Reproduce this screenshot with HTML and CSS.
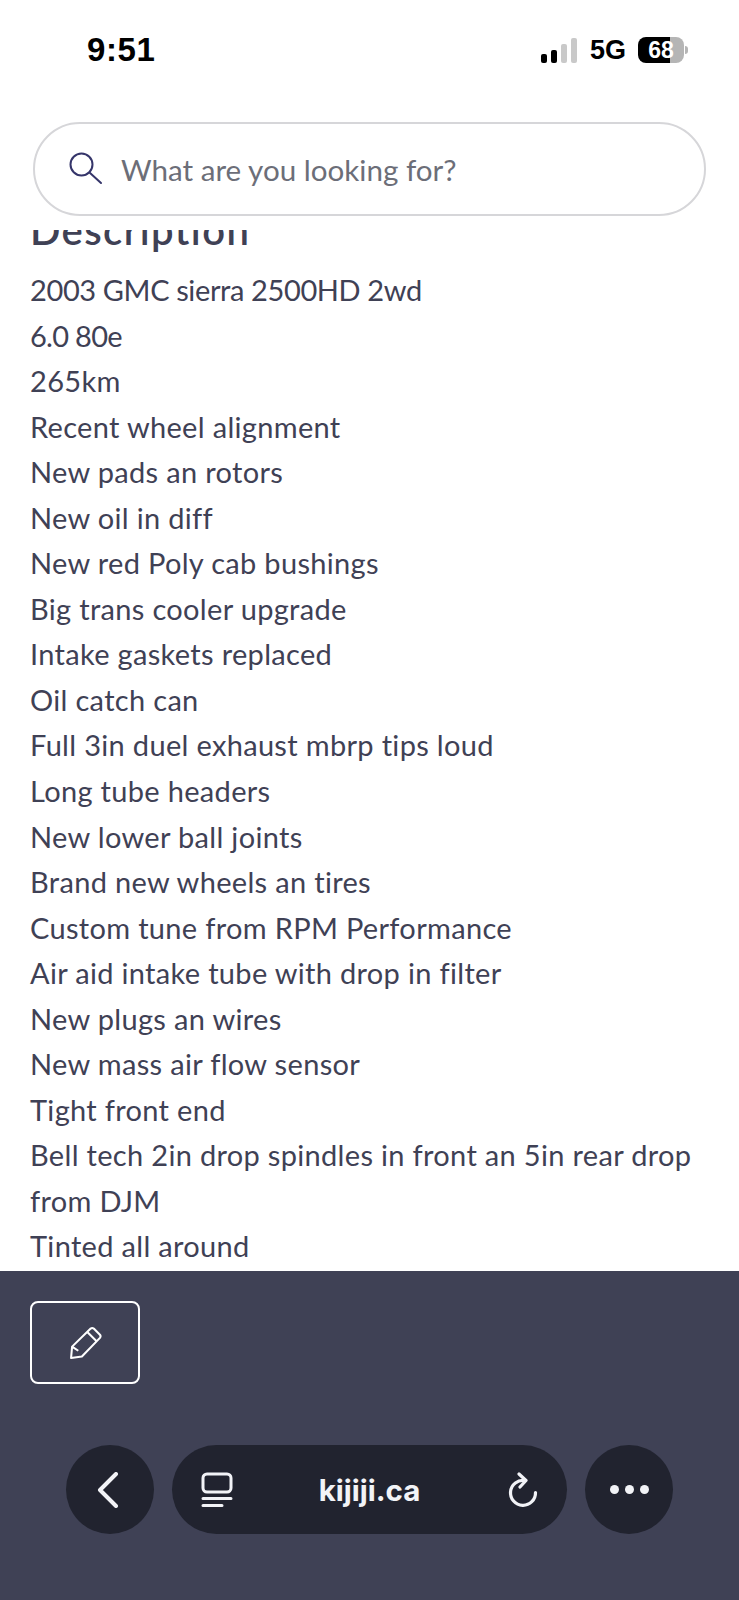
FILE: index.html
```html
<!DOCTYPE html>
<html lang="en">
<head>
<meta charset="utf-8">
<title>kijiji.ca</title>
<link rel="stylesheet" href="styles.css">
</head>
<body>
<div class="page">
  <header class="top">
    <div class="status">
      <span class="time">9:51</span>
      <div class="status-right">
        <div class="signal"><i class="s1"></i><i class="s2"></i><i class="s3 off"></i><i class="s4 off"></i></div>
        <span class="net">5G</span>
        <div class="battery"><span class="battery-body">68</span><i class="battery-cap"></i></div>
      </div>
    </div>
    <div class="search">
      <svg class="search-icon" width="36" height="36" viewBox="0 0 36 36" fill="none" stroke="#35356a" stroke-width="2" stroke-linecap="round"><circle cx="13.5" cy="12.5" r="11"/><path d="M21.5 20.5 33 31"/></svg>
      <span class="placeholder">What are you looking for?</span>
    </div>
  </header>
  <div class="heading-clip"><h2 class="heading">Description</h2></div>
  <main class="desc">
    <div class="tight">2003 GMC sierra 2500HD 2wd</div>
    <div class="tighter">6.0 80e</div>
    <div>265km</div>
    <div>Recent wheel alignment</div>
    <div>New pads an rotors</div>
    <div>New oil in diff</div>
    <div>New red Poly cab bushings</div>
    <div>Big trans cooler upgrade</div>
    <div>Intake gaskets replaced</div>
    <div>Oil catch can</div>
    <div>Full 3in duel exhaust mbrp tips loud</div>
    <div>Long tube headers</div>
    <div>New lower ball joints</div>
    <div>Brand new wheels an tires</div>
    <div>Custom tune from RPM Performance</div>
    <div>Air aid intake tube with drop in filter</div>
    <div>New plugs an wires</div>
    <div>New mass air flow sensor</div>
    <div>Tight front end</div>
    <div>Bell tech 2in drop spindles in front an 5in rear drop from DJM</div>
    <div>Tinted all around</div>
  </main>
  <footer class="bottom">
    <button class="edit" type="button">
      <svg width="33" height="33" viewBox="0 0 32 32" fill="none" stroke="#fff" stroke-width="2" stroke-linejoin="round"><path d="M2 31 3 20 21 2.5q1.5-1.2 3 0l6 6q1.2 1.5 0 3L12.500 29.500Z"/><path d="M18 6 27 15M3 20l6 4"/></svg>
    </button>
    <nav class="toolbar">
      <div class="round back">
        <svg width="24" height="36" viewBox="0 0 24 36" fill="none" stroke="#f2f3f7" stroke-width="4" stroke-linecap="round" stroke-linejoin="round"><path d="M20 2 4 18l16 16"/></svg>
      </div>
      <div class="pill">
        <svg width="32" height="36" viewBox="0 0 32 36" fill="none" stroke="#f2f3f7" stroke-width="3" stroke-linecap="round"><rect x="2" y="2" width="28" height="18" rx="4"/><path d="M2 26.500H30M2 33.500H21"/></svg>
        <span class="domain">kijiji.ca</span>
        <svg width="30" height="36" viewBox="0 0 30 36" fill="none" stroke="#f2f3f7" stroke-width="3.200" stroke-linecap="round" stroke-linejoin="round"><path d="M17 8.500A12.500 12.500 0 1 0 27.500 20.500"/><path d="M11 2l7 6.500-6 6.500"/></svg>
      </div>
      <div class="round dots"><i></i><i></i><i></i></div>
    </nav>
  </footer>
</div>
</body>
</html>
```

FILE: styles.css
```css
* { box-sizing: border-box; }
html, body { margin: 0; padding: 0; background: #fff; }
.page {
  width: 739px;
  height: 1600px;
  display: flex;
  flex-direction: column;
  overflow: hidden;
  background: #fff;
  font-family: "Lato", "Liberation Sans", sans-serif;
  color: #3f4155;
}
.top { height: 230px; padding: 37px 33px 0; flex: none; }
.status {
  height: 26px;
  display: flex;
  align-items: center;
  justify-content: space-between;
  padding: 0 0 0 54px;
  font-family: "Liberation Sans", Arial, sans-serif;
  color: #000;
}
.time { font-size: 33px; font-weight: 700; line-height: 26px; letter-spacing: 0.6px; }
.status-right { display: flex; align-items: center; }
.signal { display: flex; align-items: flex-end; gap: 4px; height: 25px; }
.signal i { width: 6px; border-radius: 2px; background: #000; display: block; }
.signal .s1 { height: 9px; }
.signal .s2 { height: 13px; }
.signal .s3 { height: 19px; }
.signal .s4 { height: 25px; }
.signal .off { background: #c9c9c9; }
.net { font-size: 27px; font-weight: 700; margin: 0 12px 0 13px; line-height: 26px; }
.battery { display: flex; align-items: center; margin-right: 18px; }
.battery-body {
  width: 46px;
  height: 26px;
  border-radius: 8px;
  background: linear-gradient(90deg, #000 0, #000 32px, #b5b5b5 32px, #b5b5b5 100%);
  color: #fff;
  font-size: 23px;
  font-weight: 700;
  line-height: 26px;
  text-align: center;
}
.battery-cap { width: 3px; height: 8px; margin-left: 1px; background: #b5b5b5; border-radius: 0 3px 3px 0; display: block; }
.search {
  margin-top: 59px;
  width: 673px;
  height: 94px;
  border: 2px solid #d6d6d9;
  border-radius: 47px;
  display: flex;
  align-items: center;
  padding-left: 33px;
}
.search-icon { flex: none; margin-right: 17px; margin-top: 2px; }
.placeholder { font-size: 29.600px; color: #6c6e78; }
.heading-clip { height: 37px; overflow: hidden; flex: none; padding-left: 30px; }
.heading { margin: -23px 0 0; font-size: 40px; line-height: 46px; font-weight: 600; letter-spacing: 1.4px; }
.desc {
  flex: 1;
  padding: 0 30px 0 30px;
  font-size: 29px;
  line-height: 45.540px;
  letter-spacing: 0.32px;
}
.tight { letter-spacing: -0.38px; }
.tighter { letter-spacing: -0.7px; }
.bottom { height: 329px; flex: none; background: #3f4155; padding: 30px 0 0 30px; }
.edit {
  width: 110px;
  height: 83px;
  display: flex;
  align-items: center;
  justify-content: center;
  background: transparent;
  border: 2px solid #fff;
  border-radius: 8px;
  padding: 0;
}
.toolbar { display: flex; gap: 18px; margin: 61px 0 0 36px; }
.round {
  width: 88px;
  height: 89px;
  border-radius: 50%;
  background: #21232f;
  display: flex;
  align-items: center;
  justify-content: center;
}
.back { padding-right: 5px; }
.pill {
  width: 395px;
  height: 89px;
  border-radius: 45px;
  background: #21232f;
  display: flex;
  align-items: center;
  justify-content: space-between;
  padding: 0 29px 0 29px;
}
.domain { font-family: "Inter", "Liberation Sans", sans-serif; font-size: 29.500px; font-weight: 700; color: #f2f3f7; margin-left: -2px; }
.dots { gap: 6px; }
.dots i { width: 9px; height: 9px; border-radius: 50%; background: #f2f3f7; display: block; }
```
